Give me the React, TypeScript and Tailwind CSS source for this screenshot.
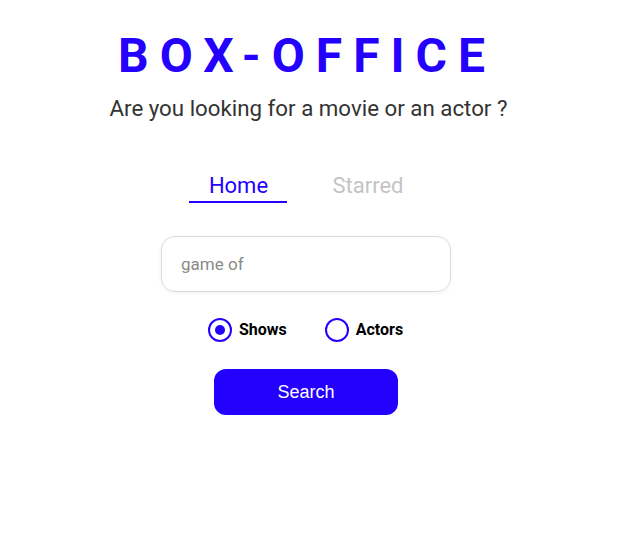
import React, { useState } from 'react';

const BLUE = '#2400ff';

function Radio({
  label,
  checked,
  onChange,
}: {
  label: string;
  checked: boolean;
  onChange: () => void;
}) {
  return (
    <label className="flex items-center gap-[7px] cursor-pointer" onClick={onChange}>
      <span className="w-[24px] h-[24px] rounded-full border-2 border-[#2400ff] flex items-center justify-center bg-white">
        {checked && <span className="w-[10px] h-[10px] rounded-full bg-[#2400ff]" />}
      </span>
      <span className="text-[16px] font-bold text-black">{label}</span>
    </label>
  );
}

export default function App() {
  const [type, setType] = useState<'shows' | 'actors'>('shows');
  const [query, setQuery] = useState('');

  return (
    <div className="w-[617px] h-[547px] bg-white flex flex-col items-center font-['Roboto',sans-serif]">
      <h1
        className="mt-[28px] text-[48px] leading-[56px] font-bold tracking-[11px] mr-[3px]"
        style={{ color: BLUE }}
      >
        BOX-OFFICE
      </h1>
      <p className="mt-[9px] text-[22.3px] leading-[30px] text-[#333333]">
        Are you looking for a movie or an actor ?
      </p>

      <nav className="mt-[49px] flex items-start gap-[45px] pr-[24px]">
        <a className="w-[98px] text-center text-[22px] leading-[28px] text-[#2400ff] border-b-2 border-[#2400ff] pb-[1px]">
          Home
        </a>
        <a className="text-[22px] leading-[28px] text-[#c4c4c4]">Starred</a>
      </nav>

      <div className="mt-[33px] pr-[5px]">
        <input
          value={query}
          onChange={(e) => setQuery(e.target.value)}
          placeholder="game of"
          className="w-[290px] h-[56px] rounded-[14px] border border-[#dcdcdc] px-[19px] text-[17px] text-[#333] placeholder:text-[#8a8a8a] shadow-[0_1px_4px_rgba(0,0,0,0.06)] outline-none"
        />
      </div>

      <div className="mt-[26px] flex items-center gap-[38px] pr-[6px]">
        <Radio label="Shows" checked={type === 'shows'} onChange={() => setType('shows')} />
        <Radio label="Actors" checked={type === 'actors'} onChange={() => setType('actors')} />
      </div>

      <button
        type="button"
        className="mt-[27px] w-[184px] h-[46px] rounded-[12px] bg-[#2400ff] text-white text-[18px] font-['Liberation_Sans',sans-serif] mr-[5px]"
      >
        Search
      </button>
    </div>
  );
}
